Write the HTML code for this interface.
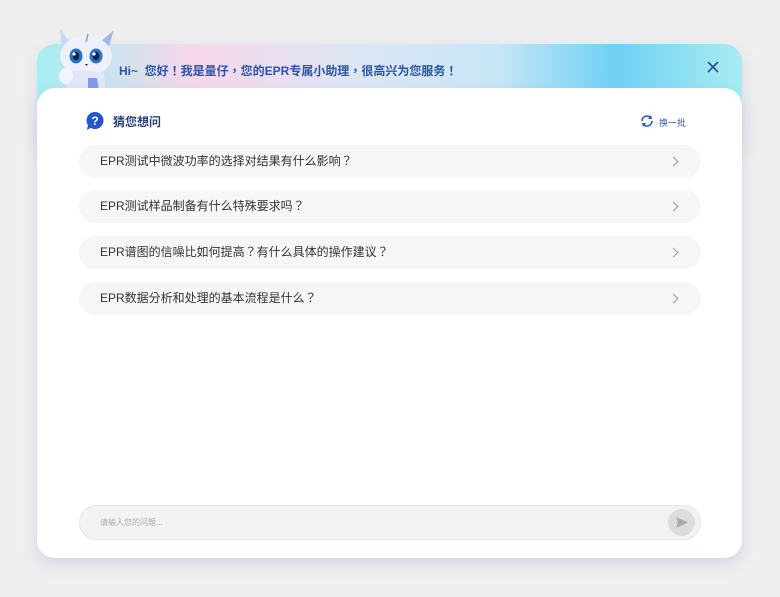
<!DOCTYPE html>
<html><head><meta charset="utf-8"><style>
*{margin:0;padding:0;box-sizing:border-box}
body{width:780px;height:597px;background:#efeff0;font-family:"Liberation Sans","Noto Sans CJK TC",sans-serif;position:relative;overflow:hidden}
.head{position:absolute;left:37px;top:44px;width:705px;height:110px;border-radius:18px;background:linear-gradient(90deg,#a6eef0 0%,#f6d7ea 22%,#dde6f4 45%,#c8e6f6 65%,#6fd1f6 82%,#a8ecf2 100%);box-shadow:0 6px 16px rgba(150,160,200,.25)}
.hi{position:absolute;left:119px;top:62px;font-size:12px;font-weight:bold;color:#2b55a8}
.x{position:absolute;left:704px;top:58px}
.panel{position:absolute;left:37px;top:88px;width:705px;height:470px;border-radius:18px;background:#fff;box-shadow:0 6px 14px rgba(180,185,215,.45)}
.title{position:absolute;left:113px;top:113px;font-size:12px;font-weight:bold;color:#2b3f7a}
.q{position:absolute;left:85px;top:111px}
.ref{position:absolute;left:640px;top:114px;font-size:9px;color:#3d5a9a}
.row{position:absolute;left:79px;width:622px;height:33px;border-radius:17px;background:#f5f6f8;font-size:12px;color:#333;line-height:33px;padding-left:21px}
.row::after{content:"";position:absolute;right:24px;top:13px;width:6px;height:6px;border-right:1.2px solid #999;border-top:1.2px solid #999;transform:rotate(45deg)}
.inp{position:absolute;left:79px;top:505px;width:622px;height:35px;border-radius:18px;background:#f3f3f3;border:1px solid #e6e6e8}
.inp span{position:absolute;left:20px;top:11px;font-size:8px;color:#aaa}
.send{position:absolute;right:5px;top:3px;width:27px;height:27px;border-radius:50%;background:#dcdcdc}
</style></head><body>
<div class="head"></div>
<svg style="position:absolute;left:50px;top:24px" width="70" height="68" viewBox="0 0 70 68">
<path d="M10 4 L22 22 L12 28Z" fill="#c9d6f7"/><path d="M64 6 L48 20 L57 28Z" fill="#9fb6ee"/>
<ellipse cx="36" cy="32" rx="26" ry="20" fill="#eef0fc"/>
<path d="M16 48 Q36 44 54 50 L56 68 L16 68Z" fill="#e3e6fa"/>
<path d="M38 54 L47 54 L49 68 L38 68Z" fill="#7c9be6"/>
<ellipse cx="26" cy="32" rx="6.5" ry="7.5" fill="#2a6fc9"/><ellipse cx="46" cy="32" rx="6.5" ry="7.5" fill="#2a6fc9"/>
<ellipse cx="26" cy="32" rx="3.2" ry="4.2" fill="#0c2450"/><ellipse cx="46" cy="32" rx="3.2" ry="4.2" fill="#0c2450"/>
<circle cx="24" cy="30" r="1.6" fill="#fff"/><circle cx="44" cy="30" r="1.6" fill="#fff"/>
<path d="M35 40 L38 40 L36.5 42Z" fill="#333"/>
<path d="M38 10 L36 18" stroke="#7c9be6" stroke-width="1.5"/>
<ellipse cx="16" cy="52" rx="7" ry="8" fill="#f2f3fd"/>
</svg>
<div class="hi">Hi~&nbsp; 您好！我是量仔，您的EPR专属小助理，很高兴为您服务！</div>
<svg class="x" width="18" height="18" viewBox="0 0 18 18"><path d="M4 4L14 14M14 4L4 14" stroke="#2d4d8f" stroke-width="1.6"/></svg>
<div class="panel"></div>
<svg class="q" width="20" height="20" viewBox="0 0 20 20"><circle cx="10" cy="9.5" r="8.5" fill="#2456c6"/><path d="M3 14 L2 19 L7 16Z" fill="#2456c6"/><text x="10" y="14" font-size="12" font-weight="bold" fill="#fff" text-anchor="middle" font-family="Liberation Sans">?</text></svg>
<div class="title">猜您想问</div>
<svg style="position:absolute;left:640px;top:114px" width="14" height="14" viewBox="0 0 14 14"><path d="M2 7 A5 5 0 0 1 11 4" stroke="#2456c6" stroke-width="1.6" fill="none"/><path d="M12 7 A5 5 0 0 1 3 10" stroke="#2456c6" stroke-width="1.6" fill="none"/><path d="M11 1 L12 5 L8 5Z" fill="#2456c6"/><path d="M3 13 L2 9 L6 9Z" fill="#2456c6"/></svg>
<div class="ref" style="left:659px;top:116px">换一批</div>
<div class="row" style="top:145px">EPR测试中微波功率的选择对结果有什么影响？</div>
<div class="row" style="top:190px">EPR测试样品制备有什么特殊要求吗？</div>
<div class="row" style="top:236px">EPR谱图的信噪比如何提高？有什么具体的操作建议？</div>
<div class="row" style="top:282px">EPR数据分析和处理的基本流程是什么？</div>
<div class="inp"><span>请输入您的问题...</span><div class="send"><svg width="27" height="27" viewBox="0 0 27 27"><path d="M8 8 L20 13.5 L8 19 L10 13.5Z" fill="#aaa"/></svg></div></div>
</body></html>
